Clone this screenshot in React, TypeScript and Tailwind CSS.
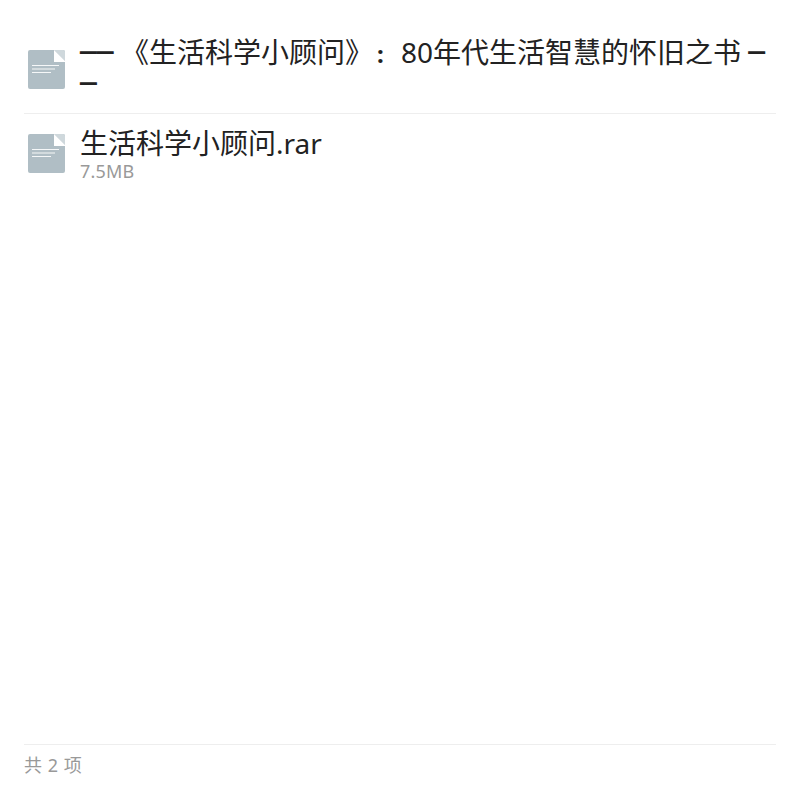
const FONT = "font-['Noto_Sans','Noto_Sans_CJK_SC',sans-serif]"
const DASH = "font-['Liberation_Mono',monospace] font-bold leading-none align-[3px]"

function FileIcon() {
  return (
    <svg width="37" height="39" viewBox="0 0 37 39" className="shrink-0">
      <path d="M2 0H35a2 2 0 0 1 2 2V37a2 2 0 0 1-2 2H2a2 2 0 0 1-2-2V2a2 2 0 0 1 2-2Z" fill="#b0bec5" />
      <path d="M26 0L37 11V2a2 2 0 0 0-2-2Z" fill="#cfd8dc" />
      <path d="M26 0L37 11V12H26Z" fill="#ffffff" />
      <rect x="4" y="15" width="27" height="1" fill="#f5f7f8" />
      <rect x="4" y="18.5" width="23" height="1" fill="#f5f7f8" />
      <rect x="4" y="22" width="19" height="1" fill="#f5f7f8" />
    </svg>
  )
}

export default function App() {
  return (
    <div className={`${FONT} flex h-[800px] flex-col bg-white px-6`}>
      <div className="flex-1 pt-[34px]">
        <div className="flex border-b border-[#eeeeee] pb-[14px]">
          <div className="w-14 pl-1 pt-4">
            <FileIcon />
          </div>
          <p className="mt-[3px] flex-1 text-[28px] leading-[31px] text-[#222222] [font-kerning:none] [text-spacing-trim:space-all]">
            <span className={DASH}>——</span> 《生活科学小顾问》
            <span className="inline-block w-[28px] pl-1 text-left text-2xl font-bold leading-none">:</span>
            80年代生活智慧的怀旧之书 <span className={DASH}>—<wbr />—</span>
          </p>
        </div>
        <div className="flex pt-[13px]">
          <div className="w-14 pl-1 pt-[7px]">
            <FileIcon />
          </div>
          <div>
            <p className="text-[28px] leading-[32px] text-[#222222]">生活科学小顾问.rar</p>
            <p className="text-lg leading-[24px] tracking-[0.2px] text-[#999999]">7.5MB</p>
          </div>
        </div>
      </div>
      <div className="h-[56px] border-t border-[#eeeeee] pt-2 text-lg leading-[24px] text-[#999999] [word-spacing:1px]">共 2 项</div>
    </div>
  )
}
